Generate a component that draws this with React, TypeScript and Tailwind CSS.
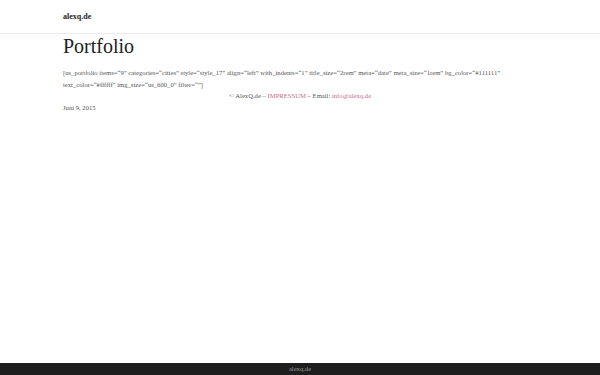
export default function App() {
  return (
    <div className="flex h-[375px] w-[600px] flex-col bg-white font-['Liberation_Serif',serif] text-[#333]">
      <header className="h-[34px] border-b border-[#ececec]">
        <div className="mx-[63px] pt-[11px] text-[8px] font-bold leading-[12px] text-[#222]">alexq.de</div>
      </header>
      <main className="mx-[63px] flex-1">
        <h1 className="text-[20px] leading-[24px] text-[#222]">Portfolio</h1>
        <p className="mt-[9px] text-[6.65px] leading-[12px] text-[#555]">
          [us_portfolio items=“9” categories=“cities” style=“style_17” align=“left” with_indents=“1” title_size=“2rem” meta=“date” meta_size=“1rem” bg_color=“#111111” text_color=“#ffffff” img_size=“us_600_0” filter=“”]
        </p>
        <p className="-mt-[1px] text-center text-[6.65px] leading-[12px] text-[#555]">
          © AlexQ.de – <span className="text-[#c86b8e]">IMPRESSUM</span> – Email: <span className="text-[#c86b8e]">info@alexq.de</span>
        </p>
        <p className="text-[6.65px] leading-[12px] text-[#555]">Juni 9, 2015</p>
      </main>
      <footer className="flex h-[12px] items-center justify-center bg-[#1e1e1e] text-[6.6px] text-[#999]">alexq.de</footer>
    </div>
  );
}
